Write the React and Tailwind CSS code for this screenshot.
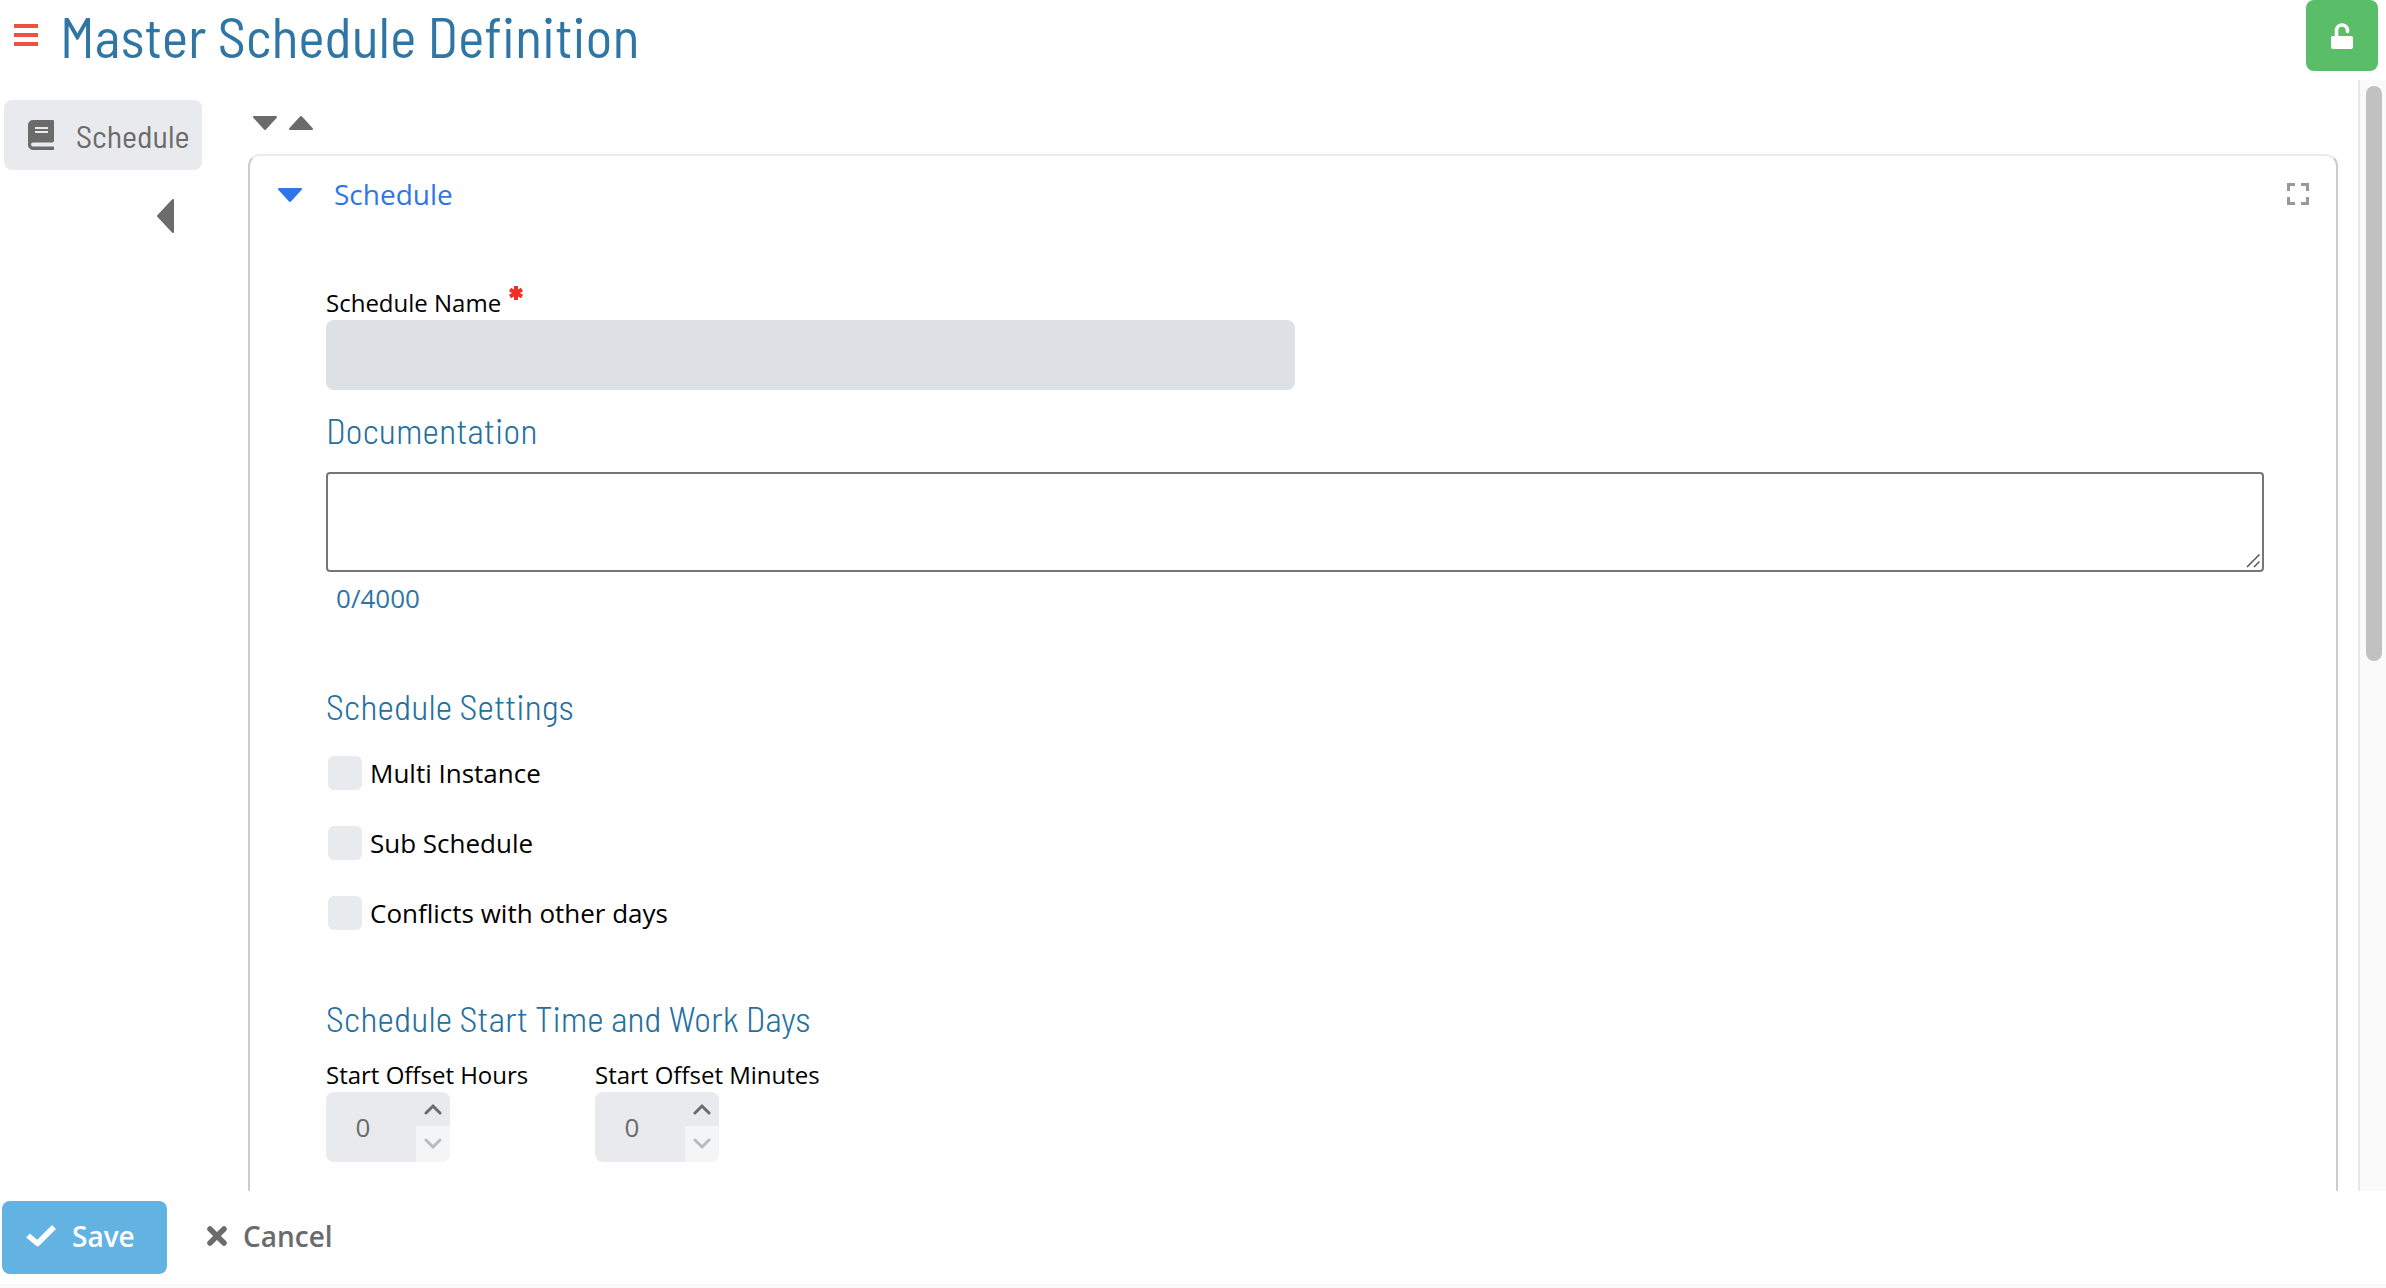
import React, { useState } from "react";

const narrow = "font-['Barlow_Semi_Condensed','Barlow_Condensed','Liberation_Sans_Narrow','Roboto_Condensed','Liberation_Sans',sans-serif]";

function Caret({ dir, className = "" }) {
  const paths = {
    down: "M2 2h22L13 14Z",
    up: "M2 14h22L13 2Z",
    left: "M17 2v32L2 18Z",
  };
  const left = dir === "left";
  return (
    <svg
      className={`${left ? "h-9 w-5" : "h-4 w-[26px]"} ${className}`}
      viewBox={left ? "0 0 20 36" : "0 0 26 16"}
      fill="currentColor"
      stroke="currentColor"
      strokeWidth="2"
      strokeLinejoin="round"
      aria-hidden="true"
    >
      <path d={paths[dir]} />
    </svg>
  );
}

function SectionTitle({ children, className = "" }) {
  return <h2 className={`${narrow} text-[36px] font-light leading-[44px] text-[#256f9f] ${className}`}>{children}</h2>;
}

function Check({ label }) {
  return (
    <label className="flex h-[70px] items-center gap-2 pl-0.5 text-[26px] leading-9">
      <input type="checkbox" className="size-[34px] appearance-none rounded-md bg-[#e9eaee] checked:bg-[#62b3e1]" />
      {label}
    </label>
  );
}

function NumberField({ id, label }) {
  const [value, setValue] = useState(0);
  return (
    <div className="flex w-[260px] flex-col">
      <label htmlFor={id} className="whitespace-nowrap text-[24px] leading-[34px]">{label}</label>
      <div className="flex h-[70px] w-[124px] overflow-hidden rounded-lg bg-[#e9eaee]">
        <input
          id={id}
          inputMode="numeric"
          value={value}
          onChange={(e) => setValue(Number(e.target.value) || 0)}
          className="w-[90px] bg-transparent pr-4 text-center text-[26px] text-[#6b6b6b] outline-none"
        />
        <div className="flex flex-1 flex-col text-[#6b6b6b]">
          <button type="button" aria-label="Increase" onClick={() => setValue(value + 1)} className="flex h-[34px] items-center justify-center">
            <svg className="h-3 w-[18px]" viewBox="0 0 18 12" fill="none" stroke="currentColor" strokeWidth="3" strokeLinecap="round"><path d="M2 10 9 3l7 7" /></svg>
          </button>
          <button type="button" aria-label="Decrease" onClick={() => setValue(Math.max(0, value - 1))} className="flex h-9 items-center justify-center bg-[#f4f5f7] text-[#bbbbbb]">
            <svg className="h-3 w-[18px]" viewBox="0 0 18 12" fill="none" stroke="currentColor" strokeWidth="3" strokeLinecap="round"><path d="m2 2 7 7 7-7" /></svg>
          </button>
        </div>
      </div>
    </div>
  );
}

export default function App() {
  const [doc, setDoc] = useState("");
  return (
    <div className="flex h-screen flex-col overflow-hidden bg-white font-['Open_Sans','Noto_Sans',sans-serif] text-black">
      <header className="flex h-20 shrink-0 items-start pr-2">
        <button type="button" aria-label="Menu" className="ml-3.5 mt-6 text-[#ee5140]">
          <svg className="h-[22px] w-6" viewBox="0 0 24 22" fill="currentColor"><path d="M0 0h24v4H0zM0 9h24v4H0zM0 18h24v4H0z" /></svg>
        </button>
        <h1 className={`${narrow} ml-[22px] flex-1 text-[56px] leading-[72px] text-[#2f76a5]`}>Master Schedule Definition</h1>
        <button type="button" aria-label="Unlock" className="flex h-[71px] w-[72px] items-center justify-center rounded-lg bg-[#5abd68] text-white">
          <svg className="h-[26px] w-[22px]" viewBox="0 0 22 26" fill="none">
            <path d="M5.500 15V7.500a5.500 5.500 0 0 1 11 0v1" stroke="currentColor" strokeWidth="3.600" strokeLinecap="round" />
            <rect y="13" width="22" height="13" rx="2" fill="currentColor" />
          </svg>
        </button>
      </header>

      <div className="flex min-h-0 flex-1">
        <nav className="w-[248px] shrink-0 px-1 pt-5">
          <a href="#schedule" className={`${narrow} flex h-[70px] w-[198px] items-center gap-[22px] rounded-lg bg-[#e9eaee] pl-6 text-[32px] text-[#6b6b6b]`}>
            <svg className="h-[30px] w-[26px]" viewBox="0 0 26 30" fill="currentColor" fillRule="evenodd">
              <path d="M5 0h20a1 1 0 0 1 1 1v20a1 1 0 0 1-1 1v4.500a1.500 1.500 0 0 1 0 3.500H5a5 5 0 0 1-5-5V5a5 5 0 0 1 5-5ZM7 7v2h13V7ZM7 11v2h13v-2ZM5 22.500a2 2 0 0 0 0 4h20v-4Z" />
            </svg>
            Schedule
          </a>
          <button type="button" aria-label="Collapse sidebar" className="ml-[152px] mt-7 block text-[#6b6b6b]">
            <Caret dir="left" />
          </button>
        </nav>

        <main className="min-w-0 flex-1 overflow-hidden">
          <div className="flex h-[74px] items-center gap-2.5 pl-1 pt-3 text-[#6b6b6b]">
            <button type="button" aria-label="Expand all"><Caret dir="down" /></button>
            <button type="button" aria-label="Collapse all"><Caret dir="up" /></button>
          </div>
          <section id="schedule" className="mr-5 rounded-xl border-2 border-x-[#cccccc] border-t-[#ebebeb] pb-60">
            <div className="flex h-20 items-center justify-between pb-1 pl-[27px] pr-[27px]">
              <button type="button" className="flex items-center gap-[31px] text-[28px] leading-10 text-[#2f76ea]">
                <Caret dir="down" className="mt-0.5" />
                Schedule
              </button>
              <button type="button" aria-label="Full screen" className="text-[#999999]">
                <svg className="size-[22px]" viewBox="0 0 22 22" fill="none" stroke="currentColor" strokeWidth="3"><path d="M1.500 8V1.500H8M14 1.500h6.500V8M20.500 14v6.500H14M8 20.500H1.500V14" /></svg>
              </button>
            </div>
            <form className="pl-[76px] pr-[72px] pt-[50px]">
              <label htmlFor="name" className="flex items-center gap-2 text-[24px] leading-[34px]">
                Schedule Name
                <svg className="mb-5 size-3.5" viewBox="0 0 14 14" stroke="#ee3124" strokeWidth="4" aria-hidden="true"><path d="M7 0v14M1 3.500l12 7M1 10.500l12-7" /></svg>
              </label>
              <input id="name" required className="block h-[70px] w-1/2 rounded-lg bg-[#dde1e6] px-4 text-[26px] outline-none" />
              <SectionTitle className="mt-[18px]">Documentation</SectionTitle>
              <div className="relative mt-5">
                <textarea aria-label="Documentation" maxLength={4000} value={doc} onChange={(e) => setDoc(e.target.value)} className="block h-[100px] w-full resize-none rounded border-2 border-[#767676] bg-white p-2 text-[26px] outline-none" />
                <svg className="absolute bottom-1 right-1 size-3.5" viewBox="0 0 14 14" stroke="#555" strokeWidth="1.500" fill="none"><path d="M1 13 13.500.500M8 13l5.500-5.500" /></svg>
              </div>
              <p className="pl-2.5 pt-2 text-[26px] leading-9 text-[#2f76a5]">{doc.length}/4000</p>
              <SectionTitle className="mt-[68px]">Schedule Settings</SectionTitle>
              <div className="mt-2.5">
                <Check label="Multi Instance" />
                <Check label="Sub Schedule" />
                <Check label="Conflicts with other days" />
              </div>
              <SectionTitle className="mt-12">Schedule Start Time and Work Days</SectionTitle>
              <div className="mt-[18px] flex gap-[9px]">
                <NumberField id="hours" label="Start Offset Hours" />
                <NumberField id="minutes" label="Start Offset Minutes" />
              </div>
            </form>
          </section>
        </main>

        <div className="w-7 shrink-0 border-l-2 border-[#e8e8e8] bg-[#fafafa] pl-1.5 pt-1.5" aria-hidden="true">
          <div className="h-[575px] w-4 rounded-full bg-[#c1c1c1]" />
        </div>
      </div>

      <footer className="flex h-[97px] shrink-0 items-start gap-10 border-b-4 border-[#fafafa] pl-0.5 pt-2.5 text-[28px] font-semibold">
        <button type="button" className="flex h-[73px] w-[165px] items-center gap-4 rounded-lg bg-[#62b3e1] pb-1 pl-6 text-white">
          <svg className="h-[22px] w-[30px]" viewBox="0 0 30 22" fill="none" stroke="currentColor" strokeWidth="5.500" strokeLinejoin="round"><path d="m2 10.500 9.500 8L28 2" /></svg>
          Save
        </button>
        <button type="button" className="flex h-[73px] items-center gap-4 pb-1 text-[#6b6b6b]">
          <svg className="size-5" viewBox="0 0 20 20" stroke="currentColor" strokeWidth="5.500" strokeLinecap="round"><path d="m3 3 14 14M17 3 3 17" /></svg>
          Cancel
        </button>
      </footer>
    </div>
  );
}
